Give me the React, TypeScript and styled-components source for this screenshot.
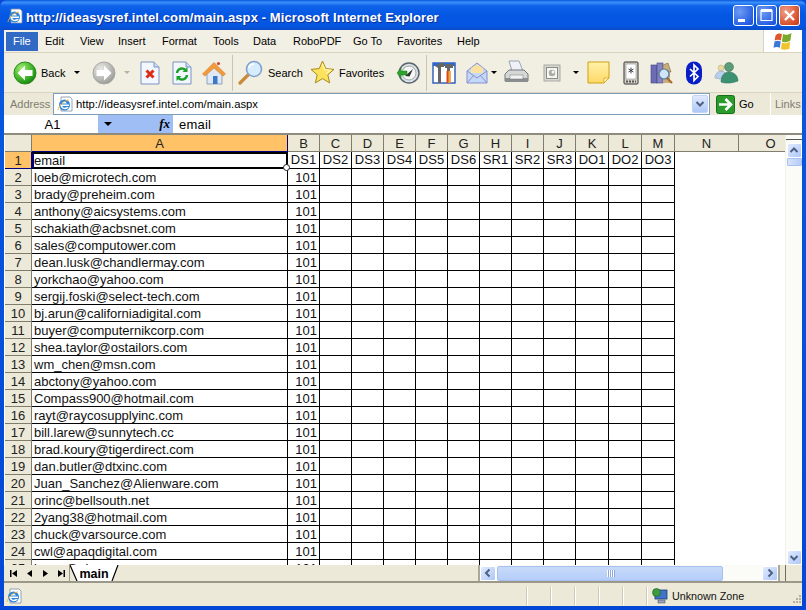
import { createGlobalStyle, styled } from 'styled-components';

const GlobalStyle = createGlobalStyle`
    html, body { margin: 0; padding: 0; background: #0a46d8; }
    * { box-sizing: border-box; }
`;

const UI_FONT = `"Liberation Sans", Arial, sans-serif`;

// Window chrome
const Win = styled.div`
    width: 806px;
    height: 610px;
    display: flex;
    flex-direction: column;
    overflow: hidden;
    font-family: ${UI_FONT};
    background: linear-gradient(#0a5ae0, #0347d6);
    border-radius: 7px 7px 0 0;
`;

const TitleBar = styled.div`
    height: 30px;
    flex: none;
    display: flex;
    align-items: center;
    padding: 1px 6px 0 7px;
    background: linear-gradient(#0a58dc 0%, #3a8ffa 8%, #0e62ea 20%, #0457e3 50%, #0456e2 85%, #0a4cc8 100%);
`;

const TitleText = styled.div`
    flex: 1;
    margin-left: 3px;
    padding-top: 3px;
    color: #fff;
    font-size: 13px;
    font-weight: 700;
    letter-spacing: 0.1px;
    white-space: nowrap;
    text-shadow: 1px 1px 0 #0a2f96;
`;

const CapButton = styled.div<{ $red?: boolean }>`
    width: 21px;
    height: 21px;
    margin-left: 2px;
    border: 1px solid #fff;
    border-radius: 3px;
    display: flex;
    align-items: center;
    justify-content: center;
    background: ${(p) =>
        p.$red
            ? 'radial-gradient(circle at 30% 30%, #eda08a, #d8502c 70%, #c23a16)'
            : 'radial-gradient(circle at 30% 30%, #6f9cf3, #2a62e4 70%, #1a4fd0)'};
`;

const Body = styled.div`
    flex: 1;
    min-height: 0;
    margin: 0 4px 4px 4px;
    display: flex;
    flex-direction: column;
    background: #ece9d8;
`;

const MenuBar = styled.div`
    height: 23px;
    flex: none;
    display: flex;
    background: #f2efe4;
    border-bottom: 1px solid #d8d4c0;
`;

const MenuItems = styled.div`
    flex: 1;
    display: flex;
    align-items: center;
    padding-left: 2px;
`;

const MenuItem = styled.div<{ $w: number; $active?: boolean }>`
    width: ${(p) => p.$w}px;
    height: 19px;
    flex: none;
    display: flex;
    align-items: center;
    padding-left: 7px;
    font-size: 11px;
    white-space: nowrap;
    color: ${(p) => (p.$active ? '#fff' : '#000')};
    background: ${(p) => (p.$active ? '#316ac5' : 'transparent')};
`;

const FlagBox = styled.div`
    width: 39px;
    background: #fff;
    border-left: 1px solid #d8d4c0;
    display: flex;
    align-items: center;
    justify-content: center;
`;

const ToolBar = styled.div`
    height: 40px;
    flex: none;
    display: flex;
    align-items: center;
    padding-left: 9px;
    background: #f1eee2;
    border-bottom: 1px solid #d8d4c0;
    font-size: 11px;
`;

const ToolText = styled.span`
    margin-left: 4px;
    color: #000;
`;

const ToolGroup = styled.div<{ $w: number }>`
    width: ${(p) => p.$w}px;
    flex: none;
    display: flex;
    align-items: center;
`;

const ToolSep = styled.div`
    width: 1px;
    height: 36px;
    flex: none;
    background: #c9c5b0;
    margin: 0 5px 0 4px;
`;

const Caret = styled.span<{ $off?: boolean; $gap?: number }>`
    display: inline-block;
    flex: none;
    margin-left: ${(p) => p.$gap ?? 8}px;
    border-left: 3px solid transparent;
    border-right: 3px solid transparent;
    border-top: 3px solid ${(p) => (p.$off ? '#b5b2a2' : '#000')};
`;

const AddressBar = styled.div`
    height: 22px;
    flex: none;
    display: flex;
    align-items: center;
    background: #ece9d8;
    font-size: 11px;
`;

const AddressLabel = styled.div`
    width: 49px;
    flex: none;
    padding-left: 6px;
    color: #7f7d72;
`;

const AddressField = styled.div`
    width: 657px;
    height: 22px;
    flex: none;
    display: flex;
    align-items: center;
    gap: 3px;
    padding: 0 1px 0 3px;
    background: #fff;
    border: 1px solid #7f9db9;
`;

const AddressUrl = styled.span`
    flex: 1;
    font-size: 11.25px;
`;

const ComboArrow = styled.div`
    width: 16px;
    height: 18px;
    display: flex;
    align-items: center;
    justify-content: center;
    background: linear-gradient(#e1eafe, #aec8f7);
    border: 1px solid #c3d3f6;
    border-radius: 2px;
`;

const GoBox = styled.div`
    width: 60px;
    flex: none;
    display: flex;
    align-items: center;
    gap: 4px;
    padding-left: 6px;
`;

const LinksBox = styled.div`
    flex: 1;
    height: 100%;
    display: flex;
    align-items: center;
    padding-left: 4px;
    color: #7f7d72;
    border-left: 1px solid #fff;
`;

// Formula bar
const FormulaBar = styled.div`
    height: 18px;
    flex: none;
    display: flex;
    align-items: center;
    background: #fff;
    font-size: 13px;
`;

const NameBox = styled.div`
    width: 94px;
    text-align: center;
    padding-left: 3px;
`;

const NameArrow = styled.div`
    width: 75px;
    height: 18px;
    display: flex;
    align-items: center;
    justify-content: space-between;
    padding: 0 3px 0 6px;
    background: #9ebef5;
`;

const NameCaret = styled.span`
    border-left: 4px solid transparent;
    border-right: 4px solid transparent;
    border-top: 4px solid #000;
`;

const FxLabel = styled.span`
    font-family: "Liberation Serif", serif;
    font-style: italic;
    font-size: 13px;
    font-weight: 700;
`;

const FormulaText = styled.div`
    padding-left: 6px;
    letter-spacing: 0.2px;
`;

// Sheet
const SheetArea = styled.div`
    flex: 1;
    min-height: 0;
    display: flex;
    background: #fff;
    border-top: 2px solid #8e8b7e;
`;

const Grid = styled.div`
    flex: 1;
    min-width: 0;
    overflow: hidden;
    margin-left: 1px;
    font-size: 13px;
`;

const Row = styled.div`
    display: flex;
    height: 17px;
`;

const HeadCell = styled.div<{ $w: number; $sel?: boolean }>`
    width: ${(p) => p.$w}px;
    flex: none;
    height: 17px;
    display: flex;
    align-items: center;
    justify-content: center;
    background: ${(p) => (p.$sel ? '#ffc266' : '#ece9d8')};
    border-right: 1px solid ${(p) => (p.$sel ? '#000080' : '#807d6e')};
    border-bottom: 1px solid ${(p) => (p.$sel ? '#000080' : '#807d6e')};
    color: #222;
`;

const Cell = styled.div<{ $w: number; $num?: boolean }>`
    width: ${(p) => p.$w}px;
    flex: none;
    height: 17px;
    line-height: 18px;
    padding: 0 ${(p) => (p.$num ? 2 : 0)}px 0 ${(p) => (p.$num ? 0 : 2)}px;
    text-align: ${(p) => (p.$num ? 'right' : 'left')};
    border-right: 1px solid #000;
    border-bottom: 1px solid #000;
    white-space: nowrap;
    overflow: hidden;
    color: #111;
`;

const ActiveCell = styled(Cell)`
    position: relative;
    overflow: visible;
    border: 2px solid #000;
    border-left: 2px solid #000080;
    line-height: 14px;
    padding-left: 0;
    &::after {
        content: '';
        position: absolute;
        right: -4px;
        bottom: -4px;
        width: 5px;
        height: 5px;
        background: #fff;
        border: 1px solid #222;
        border-radius: 50%;
    }
`;

const HeaderTextCell = styled(Cell)`
    padding: 0;
    line-height: 16px;
    text-align: center;
`;

const VScroll = styled.div`
    width: 17px;
    flex: none;
    display: flex;
    flex-direction: column;
    align-items: center;
    padding-top: 4px;
    background: #fbfbf8;
    border-left: 1px solid #f0efe8;
`;

const ScrollCap = styled.div`
    width: 100%;
    height: 1px;
    flex: none;
    margin-bottom: 3px;
    background: #555;
`;

const ScrollButton = styled.div<{ $w?: number }>`
    width: ${(p) => p.$w ?? 15}px;
    height: 15px;
    flex: none;
    display: flex;
    align-items: center;
    justify-content: center;
    background: linear-gradient(135deg, #e1eafe, #aec8f7);
    border: 1px solid #fff;
    border-radius: 2px;
`;

const VThumb = styled.div`
    width: 15px;
    height: 8px;
    background: linear-gradient(90deg, #d6e3fd, #b5cdf9);
    border: 1px solid #a8c0ee;
    border-radius: 1px;
`;

const Spacer = styled.div`
    flex: 1;
`;

// Tab strip
const TabStrip = styled.div`
    height: 18px;
    flex: none;
    display: flex;
    background: #ece9d8;
    border-bottom: 2px solid #9b988a;
`;

const TabNav = styled.div`
    width: 65px;
    flex: none;
    display: flex;
    align-items: center;
    gap: 7px;
    padding-left: 4px;
    margin-left: 1px;
    border-right: 1px solid #9b988a;
`;

const TabLabel = styled.div`
    position: relative;
    width: 50px;
    flex: none;
    padding-right: 2px;
    text-align: center;
    font-size: 12.5px;
    font-weight: 700;
    line-height: 18px;
`;

const TabName = styled.span`
    position: relative;
`;

const TabOutline = styled.svg`
    position: absolute;
    left: 0;
    top: 0;
`;

const HScroll = styled.div`
    width: 302px;
    flex: none;
    margin-left: auto;
    margin-right: 5px;
    display: flex;
    align-items: center;
    background: #fbfbf8;
    border-left: 2px solid #aca899;
    border-right: 2px solid #aca899;
`;

const StripEnd = styled.div`
    width: 17px;
    flex: none;
    border-left: 1px solid #6f6d62;
`;

const HThumb = styled.div`
    width: 226px;
    height: 15px;
    flex: none;
    margin-left: 1px;
    display: flex;
    align-items: center;
    justify-content: center;
    gap: 1px;
    background: linear-gradient(#c8daf9, #b4cdf9);
    border: 1px solid #a8c0ee;
    border-radius: 2px;
`;

const Grip = styled.span`
    width: 1px;
    height: 7px;
    background: #fff;
    box-shadow: 1px 0 0 #8fa9dd;
`;

// Status bar
const StatusBar = styled.div`
    height: 23px;
    flex: none;
    display: flex;
    align-items: center;
    padding-top: 3px;
    background: #ece9d8;
    font-size: 10.75px;
`;

const StatusIcon = styled.div`
    width: 119px;
    flex: none;
    padding-left: 2px;
    display: flex;
`;

const StatusGap = styled.div`
    flex: 1;
`;

const StatusPane = styled.div<{ $w: number }>`
    width: ${(p) => p.$w}px;
    height: 18px;
    flex: none;
    border-left: 1px solid #fff;
    box-shadow: -1px 0 0 #cdc9b5;
`;

const ZonePane = styled(StatusPane)`
    display: flex;
    align-items: center;
    gap: 4px;
    padding-left: 4px;
    color: #111;
`;

const SizeGrip = styled.svg`
    margin-left: auto;
    margin-top: 6px;
    flex: none;
`;

// Icons
const IeIcon = ({ size = 16 }: { size?: number }) => (
    <svg width={size} height={size} viewBox="0 0 16 16">
        <path d="M4 1h9l2 2v12H4z" fill="#fff" stroke="#7f8ea8" strokeWidth="0.8" />
        <circle cx="7.5" cy="9" r="5.5" fill="#2f86d8" />
        <path d="M3 8.4h9v1.6H5.2c.4 2 3 2.4 4.6 1h2c-1.6 3-6.4 3-8-.2" fill="#fff" />
        <path d="M4.8 7.4c.6-2 4-2.4 5.2 0z" fill="#fff" />
        <path d="M1 14c0-3 6-10 11-10" fill="none" stroke="#f0b040" strokeWidth="0.9" />
    </svg>
);

const CircleArrow = ({ off, back }: { off?: boolean; back?: boolean }) => (
    <svg width="24" height="24" viewBox="0 0 24 24">
        <defs>
            <radialGradient id={off ? 'offGrad' : 'onGrad'} cx="35%" cy="30%" r="75%">
                <stop offset="0" stopColor={off ? '#e8e8e4' : '#a4ec74'} />
                <stop offset="0.6" stopColor={off ? '#bcbcb8' : '#46b82c'} />
                <stop offset="1" stopColor={off ? '#989894' : '#14820f'} />
            </radialGradient>
        </defs>
        <circle cx="12" cy="12" r="11" fill={`url(#${off ? 'offGrad' : 'onGrad'})`} stroke={off ? '#a8a8a4' : '#2c8a1c'} />
        <path d={back ? 'M4.5 12L12 4.5V9h7.5v6H12v4.5z' : 'M19.5 12L12 4.5V9H4.5v6H12v4.5z'} fill="#fff" />
    </svg>
);

const StopIcon = () => (
    <svg width="22" height="24" viewBox="0 0 22 24">
        <path d="M2 1h13l5 5v17H2z" fill="#f2f6fe" stroke="#7c93c4" />
        <path d="M15 1v5h5" fill="#cfdcf5" stroke="#7c93c4" />
        <path d="M7.5 9.5l7 7M14.5 9.5l-7 7" stroke="#dc2c14" strokeWidth="3" />
    </svg>
);

const RefreshIcon = () => (
    <svg width="22" height="24" viewBox="0 0 22 24">
        <path d="M2 1h13l5 5v17H2z" fill="#f2f6fe" stroke="#7c93c4" />
        <path d="M15 1v5h5" fill="#cfdcf5" stroke="#7c93c4" />
        <path d="M6 12a5 5 0 0 1 9-2.5M16 14a5 5 0 0 1-9 2.5" fill="none" stroke="#1fa22c" strokeWidth="2.4" />
        <path d="M16.5 6v5h-5zM5.5 20v-5h5z" fill="#1fa22c" />
    </svg>
);

const HomeIcon = () => (
    <svg width="24" height="24" viewBox="0 0 24 24">
        <path d="M5 12v11h15V12l-7-7z" fill="#dfe8f6" stroke="#8da2c4" />
        <path d="M0.5 13L12 1.5 23.5 13 21 15l-9-8-9 8z" fill="#f39a3c" stroke="#d07a24" strokeWidth="0.6" />
        <rect x="11" y="15" width="4.5" height="8" fill="#3b78c8" />
        <circle cx="16.5" cy="2.5" r="1.5" fill="#c8422c" />
    </svg>
);

const SearchIcon = () => (
    <svg width="26" height="26" viewBox="0 0 26 26">
        <path d="M10 15L2 23" stroke="#c98a3a" strokeWidth="3.2" strokeLinecap="round" />
        <circle cx="16" cy="9" r="7.5" fill="#d8ecff" stroke="#7fa4cf" strokeWidth="1.6" />
        <path d="M11 8a5 5 0 0 1 5-4" fill="none" stroke="#fff" strokeWidth="1.6" />
    </svg>
);

const StarIcon = () => (
    <svg width="25" height="25" viewBox="0 0 25 25">
        <path
            d="M12.5 1l3.3 7.6 8.2.8-6.2 5.4 1.9 8.1-7.2-4.300-7.200 4.300 1.900-8.100L1 9.400l8.200-.8z"
            fill="#fde25c"
            stroke="#a88a1c"
        />
        <path d="M12.5 4l2.3 5.6 5.5.6-4 3.500" fill="none" stroke="#fff7c0" strokeWidth="1.2" />
    </svg>
);

const HistoryIcon = () => (
    <svg width="24" height="24" viewBox="0 0 24 24">
        <circle cx="13" cy="12" r="10" fill="#dfe3e6" stroke="#5a6670" strokeWidth="1.5" />
        <circle cx="13" cy="12" r="7" fill="#f6f8f6" stroke="#8a9298" strokeWidth="0.8" />
        <path d="M9 15l8-7-3.5 7.5z" fill="#333" />
        <path d="M1 12l4-5v3h6v4H5v3z" fill="#2ea32a" stroke="#177a14" strokeWidth="0.5" />
    </svg>
);

const ToolsIcon = () => (
    <svg width="24" height="24" viewBox="0 0 24 24">
        <rect x="1" y="2" width="22" height="20" fill="#fff" stroke="#2a58b8" strokeWidth="1.4" />
        <rect x="1" y="2" width="22" height="3" fill="#2a68d8" />
        <path d="M3 5l5-3h4v4H9v16H6V7zM13 3h8v4h-3v4h-3V7h-2z" fill="#666" />
        <rect x="14.5" y="10" width="4" height="12" fill="#d84a1c" />
        <rect x="16.5" y="10" width="2" height="12" fill="#f2a83c" />
    </svg>
);

const MailIcon = () => (
    <svg width="22" height="24" viewBox="0 0 22 24">
        <path d="M1 10L11 2l10 8v12H1z" fill="#c4d8f8" stroke="#8a8fd0" />
        <path d="M5 7l6-3.5L17 7v5H5z" fill="#fbe2a0" />
        <path d="M1 10l10 7 10-7M1 22l7-8M21 22l-7-8" fill="none" stroke="#8a8fd0" />
    </svg>
);

const PrintIcon = () => (
    <svg width="25" height="25" viewBox="0 0 25 25">
        <path d="M5 1h10l4 10H8z" fill="#eef2f8" stroke="#9aa3b4" />
        <path d="M1 14l4-4h15l4 4v7H1z" fill="#d6d8d8" stroke="#777" />
        <rect x="1" y="18" width="23" height="4" fill="#8a8e90" />
        <rect x="6" y="15" width="13" height="4" fill="#f2f2f2" stroke="#777" strokeWidth="0.5" />
    </svg>
);

const EditIcon = () => (
    <svg width="18" height="18" viewBox="0 0 18 18">
        <rect x="1" y="1" width="16" height="16" fill="#d9d8d2" stroke="#aaa9a3" />
        <rect x="3.5" y="3.5" width="11" height="11" fill="#f6f6f2" stroke="#8c8c86" />
        <circle cx="9" cy="9" r="3.2" fill="#aaaaa4" />
        <circle cx="10" cy="8" r="1.5" fill="#f6f6f2" />
    </svg>
);

const NoteIcon = () => (
    <svg width="23" height="23" viewBox="0 0 23 23">
        <defs>
            <linearGradient id="noteGrad" x1="0" y1="0" x2="0" y2="1">
                <stop offset="0" stopColor="#fff2a8" />
                <stop offset="1" stopColor="#ffd868" />
            </linearGradient>
        </defs>
        <path d="M1 1h21v16l-5 5H1z" fill="url(#noteGrad)" stroke="#d2a010" />
        <path d="M22 17h-5v5z" fill="#fff3b8" stroke="#d2a010" strokeWidth="0.7" />
    </svg>
);

const PdaIcon = () => (
    <svg width="16" height="24" viewBox="0 0 16 24">
        <rect x="1" y="1" width="14" height="22" rx="1" fill="#d7d4cb" stroke="#333" />
        <rect x="3" y="3" width="10" height="15" fill="#fff" stroke="#777" strokeWidth="0.5" />
        <path d="M8 6.5v6M5.5 8l5 3M10.500 8l-5 3" stroke="#333" strokeWidth="0.9" />
        <path d="M3 20.5h10" stroke="#555" strokeWidth="2" strokeDasharray="2 1" />
    </svg>
);

const BooksIcon = () => (
    <svg width="23" height="24" viewBox="0 0 23 24">
        <rect x="1" y="4" width="6" height="18" fill="#6c6cb4" stroke="#44447c" strokeWidth="0.6" />
        <rect x="7" y="2" width="6" height="20" fill="#8484c8" stroke="#44447c" strokeWidth="0.6" />
        <path d="M13 4l5-2 3 9H13z" fill="#c8ae7a" stroke="#7a6a44" strokeWidth="0.6" />
        <path d="M13 11h7v11h-7z" fill="#c8ae7a" />
        <path d="M17 17l5 5" stroke="#a86c2c" strokeWidth="2.2" />
        <circle cx="14" cy="13" r="5" fill="#cfe4f8" stroke="#5a7898" strokeWidth="1.2" />
    </svg>
);

const BluetoothIcon = () => (
    <svg width="18" height="24" viewBox="0 0 18 24">
        <rect x="1" y="0.5" width="16" height="23" rx="8" fill="#0a1ec8" />
        <path d="M5 8l8 7.5-4 4V4l4 4-8 7.5" fill="none" stroke="#fff" strokeWidth="1.7" />
    </svg>
);

const MessengerIcon = () => (
    <svg width="25" height="24" viewBox="0 0 25 24">
        <circle cx="7" cy="7" r="3" fill="#e8d8a0" stroke="#a8a078" strokeWidth="0.4" />
        <path d="M1 17c0-4 3-7 6-7s5 2 5 5l-6 3z" fill="#b8d0ec" stroke="#7c98b4" strokeWidth="0.5" />
        <circle cx="15" cy="6" r="4.500" fill="#5c9c78" stroke="#2a6a50" strokeWidth="0.5" />
        <path d="M7 21c0-7 4-10 8-10s9 3 9 9c-5 2-12 3-17 1z" fill="#3c9270" stroke="#1c6458" strokeWidth="0.5" />
    </svg>
);

const GoIcon = () => (
    <svg width="19" height="19" viewBox="0 0 19 19">
        <rect x="0.5" y="0.5" width="18" height="18" rx="2" fill="#2a9a2a" stroke="#14701a" />
        <path d="M3 9.5h11M9.500 4l5.500 5.500L9.500 15" fill="none" stroke="#fff" strokeWidth="2.6" />
    </svg>
);

const FlagIcon = () => (
    <svg width="22" height="19" viewBox="0 0 20 18">
        <path d="M3 3c2-2 4-2 6-1L8 8C6 7 4 7 2 8z" fill="#e0562c" />
        <path d="M10 2c2 1 5 1 8-1l-1 7c-3 2-6 2-8 1z" fill="#7aaa2c" />
        <path d="M2 9c2-1 4-1 5.8 0L7 15c-2-1-4-1-6 0z" fill="#3a78d8" />
        <path d="M9 10c2 1 5 1 7.8-1L16 16c-3 1-6 1-8 0z" fill="#f2c42c" />
    </svg>
);

const ZoneIcon = () => (
    <svg width="16" height="16" viewBox="0 0 16 16">
        <rect x="3" y="2" width="12" height="9" fill="#3f74c8" stroke="#1c3c78" strokeWidth="0.8" />
        <rect x="6" y="12" width="7" height="3" fill="#99a6bc" stroke="#445" strokeWidth="0.5" />
        <circle cx="4.5" cy="4.5" r="4" fill="#3e9a3e" stroke="#1c5a2c" strokeWidth="0.6" />
    </svg>
);

const Chevron = ({ dir }: { dir: 'up' | 'down' | 'left' | 'right' }) => {
    const d = {
        up: 'M1.5 6L5 2.5 8.5 6',
        down: 'M1.5 3L5 6.5 8.5 3',
        left: 'M6.5 1.5L3 5l3.5 3.5',
        right: 'M3.5 1.5L7 5 3.5 8.5',
    }[dir];
    return (
        <svg width="10" height="10" viewBox="0 0 10 10">
            <path d={d} fill="none" stroke="#4d6185" strokeWidth="2" />
        </svg>
    );
};

const NavIcon = ({ d }: { d: string }) => (
    <svg width="9" height="9" viewBox="0 0 9 9">
        <path d={d} fill="#000" />
    </svg>
);

// Sheet data
const MENUS: [string, number][] = [
    ['Edit', 35], ['View', 38], ['Insert', 44], ['Format', 51], ['Tools', 40], ['Data', 40],
    ['RoboPDF', 60], ['Go To', 44], ['Favorites', 60], ['Help', 40],
];

const COLUMNS: [string, number][] = [
    ['A', 256], ['B', 32], ['C', 32], ['D', 32], ['E', 32], ['F', 32], ['G', 32], ['H', 32],
    ['I', 32], ['J', 32], ['K', 33], ['L', 33], ['M', 33], ['N', 64], ['O', 64],
];

const DATA_HEADERS = ['DS1', 'DS2', 'DS3', 'DS4', 'DS5', 'DS6', 'SR1', 'SR2', 'SR3', 'DO1', 'DO2', 'DO3'];

const EMAILS = [
    'loeb@microtech.com', 'brady@preheim.com', 'anthony@aicsystems.com', 'schakiath@acbsnet.com',
    'sales@computower.com', 'dean.lusk@chandlermay.com', 'yorkchao@yahoo.com', 'sergij.foski@select-tech.com',
    'bj.arun@californiadigital.com', 'buyer@computernikcorp.com', 'shea.taylor@ostailors.com', 'wm_chen@msn.com',
    'abctony@yahoo.com', 'Compass900@hotmail.com', 'rayt@raycosupplyinc.com', 'bill.larew@sunnytech.cc',
    'brad.koury@tigerdirect.com', 'dan.butler@dtxinc.com', 'Juan_Sanchez@Alienware.com', 'orinc@bellsouth.net',
    '2yang38@hotmail.com', 'chuck@varsource.com', 'cwl@apaqdigital.com', 'jason@aim.com',
];

const App = () => (
    <>
        <GlobalStyle />
        <Win>
            <TitleBar>
                <IeIcon />
                <TitleText>http://ideasysref.intel.com/main.aspx - Microsoft Internet Explorer</TitleText>
                <CapButton>
                    <svg width="19" height="19" viewBox="0 0 19 19">
                        <rect x="4" y="13" width="7" height="3" fill="#fff" />
                    </svg>
                </CapButton>
                <CapButton>
                    <svg width="19" height="19" viewBox="0 0 19 19">
                        <path d="M4 4.5h11v10H4z" fill="none" stroke="#fff" strokeWidth="1.2" />
                        <path d="M4 4.5h11" stroke="#fff" strokeWidth="3" />
                    </svg>
                </CapButton>
                <CapButton $red>
                    <svg width="19" height="19" viewBox="0 0 19 19">
                        <path d="M5 5l9 9M14 5l-9 9" stroke="#fff" strokeWidth="2.4" />
                    </svg>
                </CapButton>
            </TitleBar>
            <Body>
                <MenuBar>
                    <MenuItems>
                        <MenuItem $w={32} $active>
                            File
                        </MenuItem>
                        {MENUS.map(([m, w]) => (
                            <MenuItem key={m} $w={w}>
                                {m}
                            </MenuItem>
                        ))}
                    </MenuItems>
                    <FlagBox>
                        <FlagIcon />
                    </FlagBox>
                </MenuBar>
                <ToolBar>
                    <ToolGroup $w={79}>
                        <CircleArrow back />
                        <ToolText>Back</ToolText>
                        <Caret $gap={9} />
                    </ToolGroup>
                    <ToolGroup $w={47}>
                        <CircleArrow off />
                        <Caret $off />
                    </ToolGroup>
                    <ToolGroup $w={32}>
                        <StopIcon />
                    </ToolGroup>
                    <ToolGroup $w={31}>
                        <RefreshIcon />
                    </ToolGroup>
                    <ToolGroup $w={26}>
                        <HomeIcon />
                    </ToolGroup>
                    <ToolSep />
                    <ToolGroup $w={72}>
                        <SearchIcon />
                        <ToolText>Search</ToolText>
                    </ToolGroup>
                    <ToolGroup $w={86}>
                        <StarIcon />
                        <ToolText>Favorites</ToolText>
                    </ToolGroup>
                    <ToolGroup $w={26}>
                        <HistoryIcon />
                    </ToolGroup>
                    <ToolSep />
                    <ToolGroup $w={34}>
                        <ToolsIcon />
                    </ToolGroup>
                    <ToolGroup $w={38}>
                        <MailIcon />
                        <Caret $gap={3} />
                    </ToolGroup>
                    <ToolGroup $w={39}>
                        <PrintIcon />
                    </ToolGroup>
                    <ToolGroup $w={44}>
                        <EditIcon />
                        <Caret $gap={12} />
                    </ToolGroup>
                    <ToolGroup $w={36}>
                        <NoteIcon />
                    </ToolGroup>
                    <ToolGroup $w={27}>
                        <PdaIcon />
                    </ToolGroup>
                    <ToolGroup $w={35}>
                        <BooksIcon />
                    </ToolGroup>
                    <ToolGroup $w={29}>
                        <BluetoothIcon />
                    </ToolGroup>
                    <ToolGroup $w={28}>
                        <MessengerIcon />
                    </ToolGroup>
                </ToolBar>
                <AddressBar>
                    <AddressLabel>Address</AddressLabel>
                    <AddressField>
                        <IeIcon />
                        <AddressUrl>http://ideasysref.intel.com/main.aspx</AddressUrl>
                        <ComboArrow>
                            <Chevron dir="down" />
                        </ComboArrow>
                    </AddressField>
                    <GoBox>
                        <GoIcon />
                        Go
                    </GoBox>
                    <LinksBox>Links</LinksBox>
                </AddressBar>
                <FormulaBar>
                    <NameBox>A1</NameBox>
                    <NameArrow>
                        <NameCaret />
                        <FxLabel>fx</FxLabel>
                    </NameArrow>
                    <FormulaText>email</FormulaText>
                </FormulaBar>
                <SheetArea>
                    <Grid>
                        <Row>
                            <HeadCell $w={27} />
                            {COLUMNS.map(([name, w]) => (
                                <HeadCell key={name} $w={w} $sel={name === 'A'}>
                                    {name}
                                </HeadCell>
                            ))}
                        </Row>
                        <Row>
                            <HeadCell $w={27} $sel>
                                1
                            </HeadCell>
                            <ActiveCell $w={256}>email</ActiveCell>
                            {DATA_HEADERS.map((h, i) => (
                                <HeaderTextCell key={h} $w={COLUMNS[i + 1][1]}>
                                    {h}
                                </HeaderTextCell>
                            ))}
                        </Row>
                        {EMAILS.map((email, i) => (
                            <Row key={email}>
                                <HeadCell $w={27}>{i + 2}</HeadCell>
                                <Cell $w={256}>{email}</Cell>
                                <Cell $w={32} $num>
                                    101
                                </Cell>
                                {COLUMNS.slice(2, 13).map(([name, w]) => (
                                    <Cell key={name} $w={w} />
                                ))}
                            </Row>
                        ))}
                    </Grid>
                    <VScroll>
                        <ScrollCap />
                        <ScrollButton>
                            <Chevron dir="up" />
                        </ScrollButton>
                        <VThumb />
                        <Spacer />
                        <ScrollButton>
                            <Chevron dir="down" />
                        </ScrollButton>
                    </VScroll>
                </SheetArea>
                <TabStrip>
                    <TabNav>
                        <NavIcon d="M1 1h1.5v7H1zM8 1v7L3 4.5z" />
                        <NavIcon d="M7 1v7L2 4.5z" />
                        <NavIcon d="M2 1v7l5-3.5z" />
                        <NavIcon d="M1 1v7l5-3.5zM6.5 1H8v7H6.5z" />
                    </TabNav>
                    <TabLabel>
                        <TabOutline viewBox="0 0 50 16" width="50" height="16">
                            <path d="M0 0l7 16h35l6-16z" fill="#fff" />
                            <path d="M0 0l7 16M42 16l6-16" fill="none" stroke="#000" strokeWidth="1.2" />
                        </TabOutline>
                        <TabName>main</TabName>
                    </TabLabel>
                    <HScroll>
                        <ScrollButton $w={16}>
                            <Chevron dir="left" />
                        </ScrollButton>
                        <HThumb>
                            <Grip />
                            <Grip />
                            <Grip />
                            <Grip />
                        </HThumb>
                        <Spacer />
                        <ScrollButton $w={16}>
                            <Chevron dir="right" />
                        </ScrollButton>
                    </HScroll>
                    <StripEnd />
                </TabStrip>
                <StatusBar>
                    <StatusIcon>
                        <IeIcon />
                    </StatusIcon>
                    <StatusGap />
                    <StatusPane $w={24} />
                    <StatusPane $w={24} />
                    <StatusPane $w={24} />
                    <StatusPane $w={24} />
                    <StatusPane $w={24} />
                    <ZonePane $w={155}>
                        <ZoneIcon />
                        Unknown Zone
                        <SizeGrip width="10" height="10" viewBox="0 0 10 10">
                            <path d="M7 1h2v2H7zM4 4h2v2H4zM7 4h2v2H7zM1 7h2v2H1zM4 7h2v2H4zM7 7h2v2H7z" fill="#b4b0a0" />
                        </SizeGrip>
                    </ZonePane>
                </StatusBar>
            </Body>
        </Win>
    </>
);

export default App;
